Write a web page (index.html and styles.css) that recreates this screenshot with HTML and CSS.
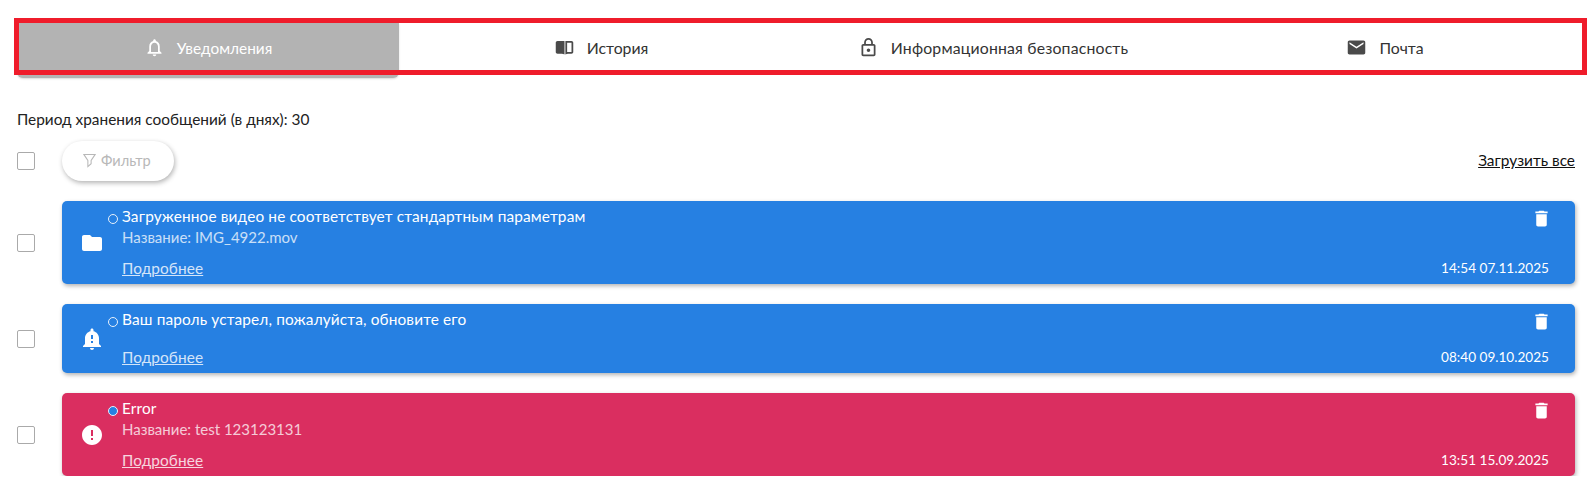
FILE: index.html
```html
<!DOCTYPE html>
<html lang="ru">
  <head>
    <meta charset="utf-8">
    <title>Уведомления</title>
    <link rel="stylesheet" href="styles.css">
  </head>
  <body>
    <div class="page">

      <nav class="tabs">
        <div class="tab tab-active">
          <svg class="tab-icon" viewBox="0 0 24 24"><path d="M12 22c1.100 0 2-.9 2-2h-4c0 1.100.9 2 2 2zm6-6v-5c0-3.070-1.630-5.640-4.500-6.320V4c0-.83-.67-1.500-1.500-1.500s-1.500.67-1.500 1.500v.68C7.640 5.360 6 7.920 6 11v5l-2 2v1h16v-1l-2-2zm-2 1H8v-6c0-2.480 1.510-4.500 4-4.500s4 2.020 4 4.500v6z"/></svg>
          <span class="tab-label-narrow">Уведомления</span>
        </div>
        <div class="tab">
          <svg class="tab-icon" viewBox="0 0 24 24"><path d="M4 4.500h7.500c.4 0 .5.2.5.5v15c-1-.8-2-1-3-1H4c-1.100 0-2-.9-2-2V6.500c0-1.100.9-2 2-2zM20 4.500h-6.500c-.4 0-.5.2-.5.5v15c1-.8 2-1 3-1h4c1.100 0 2-.9 2-2V6.500c0-1.100-.9-2-2-2zm0 2v10.500h-5V6.500z"/></svg>
          <span>История</span>
        </div>
        <div class="tab">
          <svg class="tab-icon" viewBox="0 0 24 24"><path d="M18 8h-1V6c0-2.760-2.240-5-5-5S7 3.240 7 6v2H6c-1.100 0-2 .9-2 2v10c0 1.100.9 2 2 2h12c1.100 0 2-.9 2-2V10c0-1.100-.9-2-2-2zM9 6c0-1.660 1.340-3 3-3s3 1.340 3 3v2H9V6zm9 14H6V10h12v10zm-6-3c1.100 0 2-.9 2-2s-.9-2-2-2-2 .9-2 2 .9 2 2 2z"/></svg>
          <span class="tab-label-wide">Информационная безопасность</span>
        </div>
        <div class="tab">
          <svg class="tab-icon" viewBox="0 0 24 24"><path d="M20 4H4c-1.100 0-1.990.9-1.990 2L2 18c0 1.100.9 2 2 2h16c1.100 0 2-.9 2-2V6c0-1.100-.9-2-2-2zm0 4l-8 5-8-5V6l8 5 8-5v2z"/></svg>
          <span>Почта</span>
        </div>
      </nav>

      <p class="retention">Период хранения сообщений (в днях): 30</p>

      <div class="toolbar">
        <span class="checkbox"></span>
        <button class="filter-button" type="button">
          <svg class="filter-icon" viewBox="0 0 16 18"><path d="M1 1.500h14L10 9v4l-4 3.500V9z"/></svg>
          Фильтр
        </button>
        <a class="load-all" href="#">Загрузить все</a>
      </div>

      <div class="message-row">
        <span class="checkbox"></span>
        <div class="message message-info">
          <svg class="message-icon" viewBox="0 0 24 24"><path d="M10 4H4c-1.100 0-1.990.9-1.990 2L2 18c0 1.100.9 2 2 2h16c1.100 0 2-.9 2-2V8c0-1.100-.9-2-2-2h-8l-2-2z"/></svg>
          <span class="dot"></span>
          <div class="message-body">
            <div class="message-title">Загруженное видео не соответствует стандартным параметрам</div>
            <div class="message-name">Название: IMG_4922.mov</div>
            <a class="message-link" href="#">Подробнее</a>
          </div>
          <div class="message-side">
            <svg class="trash" viewBox="0 0 24 24"><path d="M6 19c0 1.100.9 2 2 2h8c1.100 0 2-.9 2-2V7H6v12zM19 4h-3.500l-1-1h-5l-1 1H5v2h14V4z"/></svg>
            <span class="message-date">14:54 07.11.2025</span>
          </div>
        </div>
      </div>

      <div class="message-row">
        <span class="checkbox"></span>
        <div class="message message-info message-short">
          <svg class="message-icon" viewBox="0 0 24 24"><path d="M12 23c1.100 0 1.990-.89 1.990-1.990h-3.980c0 1.100.89 1.990 1.990 1.990zm7-6v-6c0-3.350-2.360-6.150-5.500-6.830V3c0-.83-.67-1.500-1.500-1.500s-1.500.67-1.500 1.500v1.170C7.360 4.850 5 7.650 5 11v6l-2 2v1h18v-1l-2-2zm-6-1h-2v-2h2v2zm0-4h-2V8h2v4z"/></svg>
          <span class="dot"></span>
          <div class="message-body">
            <div class="message-title">Ваш пароль устарел, пожалуйста, обновите его</div>
            <a class="message-link" href="#">Подробнее</a>
          </div>
          <div class="message-side">
            <svg class="trash" viewBox="0 0 24 24"><path d="M6 19c0 1.100.9 2 2 2h8c1.100 0 2-.9 2-2V7H6v12zM19 4h-3.500l-1-1h-5l-1 1H5v2h14V4z"/></svg>
            <span class="message-date">08:40 09.10.2025</span>
          </div>
        </div>
      </div>

      <div class="message-row">
        <span class="checkbox"></span>
        <div class="message message-error">
          <svg class="message-icon" viewBox="0 0 24 24"><path d="M12 2C6.480 2 2 6.480 2 12s4.480 10 10 10 10-4.480 10-10S17.520 2 12 2zm1 15h-2v-2h2v2zm0-4h-2V7h2v6z"/></svg>
          <span class="dot dot-unread"></span>
          <div class="message-body">
            <div class="message-title">Error</div>
            <div class="message-name">Название: test 123123131</div>
            <a class="message-link" href="#">Подробнее</a>
          </div>
          <div class="message-side">
            <svg class="trash" viewBox="0 0 24 24"><path d="M6 19c0 1.100.9 2 2 2h8c1.100 0 2-.9 2-2V7H6v12zM19 4h-3.500l-1-1h-5l-1 1H5v2h14V4z"/></svg>
            <span class="message-date">13:51 15.09.2025</span>
          </div>
        </div>
      </div>

    </div>

    <div class="highlight-frame"></div>
  </body>
</html>
```

FILE: styles.css
```css
body {
  margin: 0;
  background-color: #fff;
  color: #222;
  font-family: "Lato", "Noto Sans", sans-serif;
  font-size: 15.4px;
}

a {
  color: inherit;
}

.page {
  padding: 23px 13px 0 17px;
}

/* tabs */
.tabs {
  display: grid;
  grid-template-columns: 382px 1fr 1fr 1fr;
  height: 54px;
}

.tab {
  display: flex;
  align-items: center;
  justify-content: center;
  gap: 12px;
  height: 49px;
  padding-left: 12px;
  color: #333;
  font-size: 15.8px;
}

.tab-active {
  height: 55px;
  padding: 0 0 6px 0;
  box-sizing: border-box;
  background-color: #b3b3b3;
  border-radius: 0 0 6px 6px;
  box-shadow: 0 1px 2px rgba(0, 0, 0, 0.15);
  color: #fff;
}

.tab-icon {
  width: 21px;
  height: 21px;
  fill: #4a4a4a;
}

.tab-active .tab-icon {
  fill: #fff;
}

.tab-label-narrow {
  font-size: 15.4px;
}

.tab-label-wide {
  letter-spacing: 0.18px;
}

/* red frame drawn over the tabs */
.highlight-frame {
  position: absolute;
  left: 14px;
  top: 18px;
  width: 1563px;
  height: 47px;
  border: 5px solid #ef1c2b;
}

.retention {
  margin: 32px 0 0 0;
  line-height: 20px;
  color: #222;
}

.toolbar {
  display: flex;
  align-items: center;
  margin-top: 12px;
  height: 40px;
}

.checkbox {
  display: block;
  flex: none;
  width: 16px;
  height: 16px;
  border: 1px solid #aaa;
  border-radius: 2px;
  background-color: #fff;
}

.filter-button {
  display: flex;
  align-items: center;
  gap: 5px;
  margin-left: 27px;
  width: 112px;
  height: 40px;
  padding: 0 0 2px 21px;
  border: none;
  border-radius: 20px;
  background-color: #fff;
  box-shadow: 1px 2px 5px rgba(0, 0, 0, 0.3);
  color: #b8b8b8;
  font-family: inherit;
  font-size: 14.6px;
}

.filter-icon {
  width: 13px;
  height: 15px;
  fill: none;
  stroke: #b8b8b8;
  stroke-width: 1.300;
}

.load-all {
  margin-left: auto;
  padding-bottom: 2px;
  color: #111;
}

/* messages */
.message-row {
  display: flex;
  align-items: center;
  gap: 27px;
  margin-top: 20px;
}

.message {
  flex: 1;
  display: flex;
  align-items: center;
  height: 83px;
  box-sizing: border-box;
  padding: 0 26px 0 18px;
  border-radius: 5px;
  box-shadow: 1px 2px 4px rgba(0, 0, 0, 0.3);
  color: #fff;
}

.message-short {
  height: 69px;
}

.message-info {
  background-color: #2680e2;
}

.message-error {
  background-color: #da2e60;
}

.message-icon {
  flex: none;
  width: 24px;
  height: 24px;
  fill: #fff;
}

.dot {
  flex: none;
  align-self: flex-start;
  width: 8px;
  height: 8px;
  margin: 13px 4px 0 4px;
  border: 1px solid #e6f0fb;
  border-radius: 50%;
}

.dot-unread {
  background-color: #2680e2;
}

.message-body {
  flex: 1;
  align-self: stretch;
  display: flex;
  flex-direction: column;
  padding: 6px 0 7px 0;
}

.message-title {
  letter-spacing: 0.14px;
  line-height: 18px;
}

.message-name {
  margin-top: 3px;
  font-size: 15px;
  line-height: 18px;
  opacity: 0.75;
}

.message-link {
  margin-top: auto;
  letter-spacing: 0.1px;
  line-height: 18px;
  opacity: 0.8;
}

.message-side {
  align-self: stretch;
  display: flex;
  flex-direction: column;
  justify-content: space-between;
  align-items: flex-end;
  padding: 7px 0 7px 0;
}

.trash {
  width: 21px;
  height: 21px;
  margin-right: -3px;
  fill: #fff;
}

.message-date {
  font-size: 13.6px;
  line-height: 18px;
}
```
